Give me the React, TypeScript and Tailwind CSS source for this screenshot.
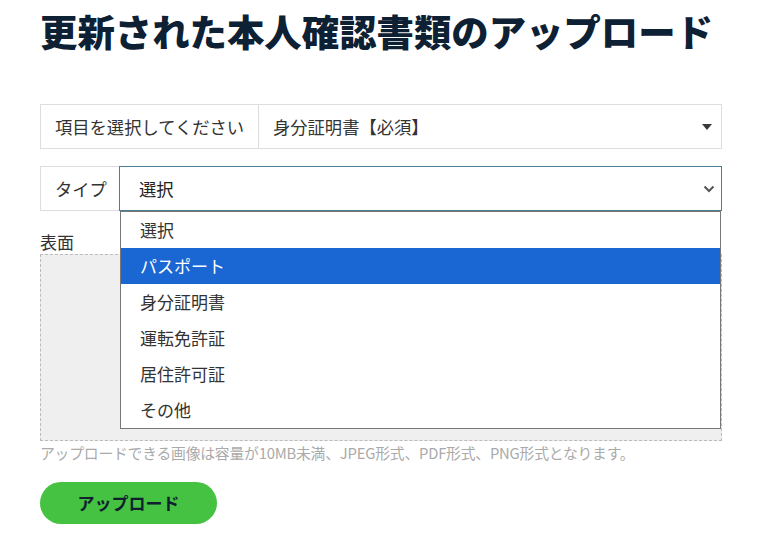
const OPTIONS = ["選択", "パスポート", "身分証明書", "運転免許証", "居住許可証", "その他"];

const jp = { fontFamily: '"Noto Sans CJK JP", "Noto Sans", sans-serif' };

function TypeDropdown() {
  return (
    <div className="absolute left-[80px] top-[45px] z-10 w-[601px] border border-[#777] bg-white">
      {OPTIONS.map((opt, i) => (
        <div
          key={opt}
          className={`flex h-[36px] items-center px-[19px] text-[17px] ${
            i === 1 ? "bg-[#1a66d2] text-white" : "text-[#333]"
          }`}
        >
          {opt}
        </div>
      ))}
    </div>
  );
}

export default function App() {
  return (
    <div className="min-h-[552px] w-[770px] bg-white px-[40px]" style={jp}>
      <h1 className="pt-[9px] text-[37.4px] font-black leading-[44px] whitespace-nowrap text-[#0e2033]">
        更新された本人確認書類のアップロード
      </h1>

      {/* item select */}
      <div className="mt-[51px] flex h-[45px] w-[682px] border border-[#ddd] text-[17.3px] text-[#333]">
        <div className="flex w-[218px] items-center whitespace-nowrap border-r border-[#ddd] px-[14px]">
          項目を選択してください
        </div>
        <div className="flex flex-1 items-center justify-between pl-[14px] pr-[9px]">
          <span>身分証明書【必須】</span>
          <svg width="10" height="6" viewBox="0 0 10 6">
            <path d="M0 0h10L5 6z" fill="#3a3a3a" />
          </svg>
        </div>
      </div>

      {/* type select */}
      <div className="relative mt-[17px] flex h-[45px] w-[682px] text-[17.3px] text-[#333]">
        <div className="flex w-[79px] items-center whitespace-nowrap border-y border-l border-[#ddd] pl-[14px]">
          タイプ
        </div>
        <div className="flex flex-1 items-center justify-between border border-[#4b7d96] pl-[19px] pr-[6px] text-[#222]">
          <span>選択</span>
          <svg width="12" height="8" viewBox="0 0 12 8">
            <path d="M1.5 1.5L6 6l4.5-4.5" fill="none" stroke="#555" strokeWidth="2" />
          </svg>
        </div>
        <TypeDropdown />
      </div>

      <div className="mt-[19px] text-[17px] leading-[24px] text-[#333]">表面</div>
      <div className="h-[187px] w-[682px] border border-dashed border-[#bbb] bg-[#efefef]" />

      <p className="mt-[2px] whitespace-nowrap text-[14.8px] tracking-[-0.2px] leading-[20px] text-[#aaa]">
        アップロードできる画像は容量が10MB未満、JPEG形式、PDF形式、PNG形式となります。
      </p>

      <button className="mt-[19px] flex h-[42px] w-[177px] items-center justify-center rounded-full bg-[#45c242] text-[17px] font-bold text-[#10202e]">
        アップロード
      </button>
    </div>
  );
}
